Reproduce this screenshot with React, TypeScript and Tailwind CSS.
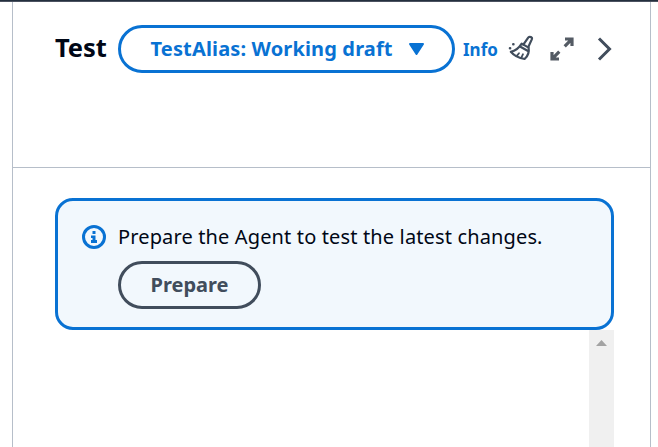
function BroomIcon() {
  return (
    <svg className="ml-[10px] mt-[-3px] h-[28px] w-[28px] shrink-0" viewBox="0 0 28 28" fill="none" stroke="#414d5c" strokeWidth="2.2" strokeLinejoin="round" strokeLinecap="round">
      <path d="M15.3 10.7L20.4 3.4C21.6 2 24.7 3.3 23.8 5.4L20.2 13.2" />
      <path d="M13.7 9.6L20.6 13.6C21.4 18.2 20 22 16.6 25C11.3 24.2 6.2 21.8 2.8 17.8C7.3 16.8 11 14 13.7 9.6Z" />
      <path d="M12.4 12.8L20 17" />
      <path d="M9.2 21.4L11 19.2M13.6 23.2L15 20.2" strokeWidth="1.8" />
      <path d="M2 14.2H2.1M5.3 10.2H5.4" strokeWidth="2.6" />
    </svg>
  );
}

function ExpandIcon() {
  return (
    <svg className="ml-[14px] h-[24px] w-[24px] shrink-0" viewBox="0 0 24 24" fill="none" stroke="#545b64" strokeWidth="3.2">
      <path d="M15 2H22V9M21.8 2.2L14.7 9.3M2 15V22H9M2.2 21.8L9.3 14.7" />
    </svg>
  );
}

function Header() {
  return (
    <header className="flex h-[166px] shrink-0 items-start border-b border-[#b6bec9] pl-[42px] pt-[23px]">
      <div className="flex h-[48px] items-center whitespace-nowrap">
        <h2 className="mt-[-4px] w-[63px] text-[25.5px] font-bold leading-[36px] tracking-[-0.1px] text-[#000716]">Test</h2>
        <button className="flex h-[48px] w-[337px] shrink-0 items-center rounded-full border-[3px] border-[#0972d3] pl-[29.5px] text-[20px] font-bold leading-[30px] text-[#0972d3]">
          <span className="w-[257px] text-left tracking-[0.15px]">TestAlias: Working draft</span>
          <svg className="h-[14px] w-[17px]" viewBox="0 0 17 14">
            <path d="M2 2H15L8.5 12Z" fill="#0972d3" stroke="#0972d3" strokeWidth="2" strokeLinejoin="round" />
          </svg>
        </button>
        <a className="ml-[8px] mt-[2px] w-[35px] text-[17px] font-bold leading-[24px] text-[#0972d3]">Info</a>
        <BroomIcon />
        <ExpandIcon />
        <svg className="ml-[22px] h-[24px] w-[17px] shrink-0" viewBox="0 0 17 24" fill="none" stroke="#414d5c" strokeWidth="3">
          <path d="M3 1.5L13.5 12L3 22.5" />
        </svg>
      </div>
    </header>
  );
}

function PrepareAlert() {
  return (
    <section className="flex h-[132px] w-[559px] shrink-0 items-start rounded-[18px] border-[3px] border-[#0972d3] bg-[#f2f8fd] pl-[24px] pt-[24px]">
      <svg className="h-[24px] w-[24px] shrink-0" viewBox="0 0 24 24" fill="none">
        <circle cx="12" cy="12" r="10.5" stroke="#0972d3" strokeWidth="3" />
        <path d="M10.5 6H13.5V9H10.5ZM9 10.5H13.5V15H15V18H9V15H10.5V13H9Z" fill="#0972d3" />
      </svg>
      <div className="ml-[12px] whitespace-nowrap">
        <p className="h-[36px] text-[20px] leading-[24px] tracking-[0.14px] text-[#000716]">Prepare the Agent to test the latest changes.</p>
        <button className="flex h-[48px] w-[143px] items-center justify-center rounded-full border-[3px] border-[#414d5c] text-[20px] font-bold leading-[30px] text-[#414d5c]">Prepare</button>
      </div>
    </section>
  );
}

export default function App() {
  return (
    <main className="flex h-[447px] w-[658px] flex-col overflow-hidden bg-white font-['Noto_Sans','Open_Sans',sans-serif]">
      <div className="h-[2px] shrink-0 border-b border-[#4b5260] bg-[#232f3e]" />
      <div className="ml-[12px] flex min-h-0 w-[639px] flex-1 flex-col border-x border-[#b6bec9]">
        <Header />
        <div className="flex min-h-0 flex-1 flex-col pl-[42px] pt-[30px]">
          <PrepareAlert />
          <div className="flex min-h-0 w-[559px] flex-1 justify-end">
            <div className="flex w-[25px] justify-center bg-[#f0f0f0] pt-[10px]">
              <svg className="h-[6px] w-[11px]" viewBox="0 0 11 6">
                <path d="M0 6L5.5 0L11 6Z" fill="#a3a3a3" />
              </svg>
            </div>
          </div>
        </div>
      </div>
    </main>
  );
}
